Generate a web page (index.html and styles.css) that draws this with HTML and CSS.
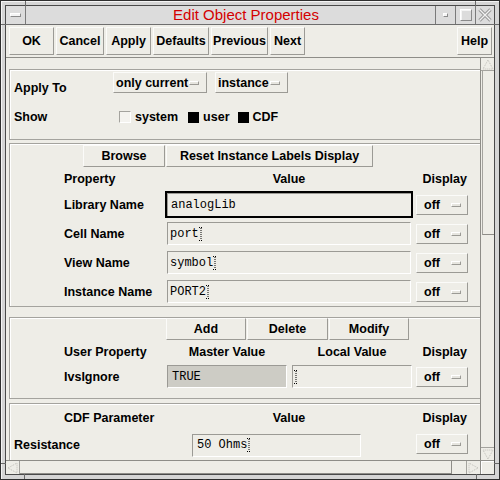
FILE: index.html
```html
<!DOCTYPE html>
<html>
<head>
<meta charset="utf-8">
<link rel="stylesheet" href="styles.css">
</head>
<body>
<div class="window">
  <span class="tick tick-t1"></span><span class="tick tick-t2"></span>
  <span class="tick tick-b1"></span><span class="tick tick-b2"></span>
  <span class="tick tick-l1"></span><span class="tick tick-l2"></span>
  <span class="tick tick-r1"></span><span class="tick tick-r2"></span>
  <div class="inner">
    <div class="titlebar">
      <div class="tb-menu"><span class="menu-bar"></span></div>
      <div class="tb-title">Edit Object Properties</div>
      <div class="tb-btn"><span class="min-sq"></span></div>
      <div class="tb-btn"><span class="max-sq"></span></div>
      <div class="tb-btn tb-close">
        <svg width="14" height="14" viewBox="0 0 14 14"><path d="M1.5 1.5L12.5 12.5M12.5 1.5L1.5 12.5" stroke="#9a9a9a" stroke-width="3.2" fill="none"/><path d="M1.5 1.5L12.5 12.5M12.5 1.5L1.5 12.5" stroke="#f2f2f2" stroke-width="1.2" fill="none"/></svg>
      </div>
    </div>

    <div class="toolbar">
      <div class="btn w-ok">OK</div>
      <div class="btn w-cancel">Cancel</div>
      <div class="btn w-apply">Apply</div>
      <div class="btn w-defaults">Defaults</div>
      <div class="btn w-prev">Previous</div>
      <div class="btn w-next">Next</div>
      <div class="btn w-help">Help</div>
    </div>

    <div class="main">
      <div class="viewport">
        <div class="sec sec1">
          <div class="row-apply">
            <div class="lbl-apply">Apply To</div>
            <div class="opt opt-wide"><span>only current</span><span class="ind"></span></div>
            <div class="opt opt-inst"><span>instance</span><span class="ind"></span></div>
          </div>
          <div class="row-show">
            <div class="lbl-show">Show</div>
            <span class="chk"></span><span class="chk-txt gap-sys">system</span>
            <span class="chk on"></span><span class="chk-txt gap-user">user</span>
            <span class="chk on"></span><span class="chk-txt">CDF</span>
          </div>
        </div>

        <div class="sec sec2">
          <div class="btnrow btnrow2">
            <div class="sbtn w-browse">Browse</div>
            <div class="sbtn w-reset">Reset Instance Labels Display</div>
          </div>
          <div class="hdr grid2">
            <div>Property</div>
            <div class="center">Value</div>
            <div class="right">Display</div>
          </div>
          <div class="prow grid2">
            <div>Library Name</div>
            <div class="inp focus">analogLib</div>
            <div class="off"><span>off</span><span class="ind"></span></div>
          </div>
          <div class="prow grid2">
            <div>Cell Name</div>
            <div class="inp">port<svg class="caret" width="4" height="14" viewBox="0 0 4 14"><path d="M0 0.5h4M2 1v12M0 13.5h4" stroke="#000" stroke-width="1" stroke-dasharray="1 1" fill="none"/></svg></div>
            <div class="off"><span>off</span><span class="ind"></span></div>
          </div>
          <div class="prow grid2">
            <div>View Name</div>
            <div class="inp">symbol<svg class="caret" width="4" height="14" viewBox="0 0 4 14"><path d="M0 0.5h4M2 1v12M0 13.5h4" stroke="#000" stroke-width="1" stroke-dasharray="1 1" fill="none"/></svg></div>
            <div class="off"><span>off</span><span class="ind"></span></div>
          </div>
          <div class="prow grid2">
            <div>Instance Name</div>
            <div class="inp">PORT2<svg class="caret" width="4" height="14" viewBox="0 0 4 14"><path d="M0 0.5h4M2 1v12M0 13.5h4" stroke="#000" stroke-width="1" stroke-dasharray="1 1" fill="none"/></svg></div>
            <div class="off"><span>off</span><span class="ind"></span></div>
          </div>
        </div>

        <div class="sec sec3">
          <div class="btnrow btnrow3">
            <div class="sbtn w-add">Add</div>
            <div class="sbtn w-delete">Delete</div>
            <div class="sbtn w-modify">Modify</div>
          </div>
          <div class="hdr grid3">
            <div>User Property</div>
            <div class="center">Master Value</div>
            <div class="center">Local Value</div>
            <div class="right">Display</div>
          </div>
          <div class="urow grid3">
            <div>IvsIgnore</div>
            <div class="inp master">TRUE</div>
            <div class="inp"><svg class="caret first" width="4" height="14" viewBox="0 0 4 14"><path d="M0 0.5h4M2 1v12M0 13.5h4" stroke="#000" stroke-width="1" stroke-dasharray="1 1" fill="none"/></svg></div>
            <div class="off"><span>off</span><span class="ind"></span></div>
          </div>
        </div>

        <div class="sec sec4">
          <div class="hdr4 grid2">
            <div>CDF Parameter</div>
            <div class="center">Value</div>
            <div class="right">Display</div>
          </div>
          <div class="rrow">
            <div class="lbl-res">Resistance</div>
            <div class="inp inp-res">50 Ohms<svg class="caret" width="4" height="14" viewBox="0 0 4 14"><path d="M0 0.5h4M2 1v12M0 13.5h4" stroke="#000" stroke-width="1" stroke-dasharray="1 1" fill="none"/></svg></div>
            <div class="off off-res"><span>off</span><span class="ind"></span></div>
          </div>
        </div>
      </div>

      <div class="vscroll">
        <div class="arr arr-up"><svg width="12" height="11" viewBox="0 0 12 11"><path d="M6 1L1 10H11Z" stroke="#bfbeb8" stroke-dasharray="1 1" fill="none"/></svg></div>
        <div class="vthumb"></div>
        <div class="trough"></div>
        <div class="arr arr-down"><svg width="12" height="11" viewBox="0 0 12 11"><path d="M6 10L1 1H11Z" stroke="#bfbeb8" stroke-dasharray="1 1" fill="none"/></svg></div>
      </div>
    </div>

    <div class="hrow">
      <div class="hscroll">
        <div class="harr harr-l"><svg width="11" height="12" viewBox="0 0 11 12"><path d="M1 6L10 1V11Z" stroke="#bfbeb8" stroke-dasharray="1 1" fill="none"/></svg></div>
        <div class="hthumb"></div>
        <div class="htrough"></div>
        <div class="harr harr-r"><svg width="11" height="12" viewBox="0 0 11 12"><path d="M10 6L1 1V11Z" stroke="#bfbeb8" stroke-dasharray="1 1" fill="none"/></svg></div>
      </div>
      <div class="corner"></div>
    </div>
  </div>
</div>
</body>
</html>
```

FILE: styles.css
```css
* { box-sizing: border-box; }

body {
  margin: 0;
  font-family: "Liberation Sans", Arial, sans-serif;
  font-size: 12.5px;
  font-weight: bold;
  color: #000;
  background: #ffffff;
}

.window {
  position: relative;
  width: 500px;
  height: 480px;
  border: 1px solid #2e2e2e;
  background: #d5d5d5;
  box-shadow: inset 1px 1px 0 #f4f4f4;
  padding: 4px;
  display: flex;
}

.tick { position: absolute; background: #6a6a6a; }
.tick-t1 { left: 24px; top: 0; width: 1px; height: 5px; }
.tick-t2 { left: 474px; top: 0; width: 1px; height: 5px; }
.tick-b1 { left: 23px; bottom: 0; width: 1px; height: 5px; }
.tick-b2 { left: 475px; bottom: 0; width: 1px; height: 5px; }
.tick-l1 { left: 0; top: 23px; width: 5px; height: 1px; }
.tick-l2 { left: 0; top: 462px; width: 5px; height: 1px; }
.tick-r1 { right: 0; top: 23px; width: 5px; height: 1px; }
.tick-r2 { right: 0; top: 462px; width: 5px; height: 1px; }

.inner {
  flex: 1;
  min-width: 0;
  border: 1px solid #4a4a4a;
  background: #eeede7;
  display: flex;
  flex-direction: column;
}

/* title bar */
.titlebar {
  height: 19px;
  flex: none;
  display: flex;
  background: #dcdcdc;
  border-bottom: 1px solid #6e6e6e;
}
.tb-menu {
  width: 20px;
  border-right: 1px solid #7a7a7a;
  display: flex;
  align-items: center;
  justify-content: center;
}
.menu-bar {
  width: 11px;
  height: 4px;
  background: #f4f4f4;
  border: 1px solid;
  border-color: #ffffff #8a8a8a #8a8a8a #ffffff;
}
.tb-title {
  flex: 1;
  text-align: center;
  padding-left: 31px;
  font-weight: normal;
  font-size: 15px;
  line-height: 18px;
  color: #d40000;
}
.tb-btn {
  width: 20px;
  border-left: 1px solid #7a7a7a;
  display: flex;
  align-items: center;
  justify-content: center;
}
.tb-close { width: 19px; }
.min-sq {
  width: 5px;
  height: 4px;
  background: #f4f4f4;
  border: 1px solid;
  border-color: #ffffff #8a8a8a #8a8a8a #ffffff;
}
.max-sq {
  width: 12px;
  height: 12px;
  border: 1px solid;
  border-color: #ffffff #8a8a8a #8a8a8a #ffffff;
  box-shadow: 1px 1px 0 #f4f4f4 inset;
}

/* toolbar */
.toolbar {
  height: 33px;
  flex: none;
  display: flex;
  gap: 2px;
  padding: 2px 2px 2px 3px;
  border-bottom: 1px solid #8e8d88;
}
.btn, .sbtn {
  display: flex;
  align-items: center;
  justify-content: center;
  background: #eeede7;
  border: 1px solid;
  border-color: #fbfbf9 #9b9a95 #9b9a95 #fbfbf9;
  white-space: nowrap;
}
.btn { height: 28px; }
.w-ok { width: 45px; }
.w-cancel { width: 48px; }
.w-apply { width: 45px; }
.w-defaults { width: 56px; }
.w-prev { width: 57px; }
.w-next { width: 35px; }
.w-help { width: 35px; margin-left: auto; }

/* main */
.main {
  flex: 1;
  min-height: 0;
  display: flex;
}
.viewport {
  flex: 1;
  min-width: 0;
  overflow: hidden;
  padding: 11px 0 0 3px;
}

.sec {
  width: 490px;
  border: 1px solid #a4a39e;
  box-shadow: inset 1px 1px 0 #ffffff;
}
.sec1 { height: 71px; }
.sec2 { height: 164px; margin-top: 3px; }
.sec3 { height: 82px; margin-top: 10px; }
.sec4 { height: 80px; margin-top: 4px; }

/* section 1 */
.row-apply {
  height: 21px;
  margin-top: 2px;
  display: flex;
  align-items: flex-start;
}
.lbl-apply {
  width: 103px;
  padding-left: 4px;
  margin-top: 9px;
  line-height: 14px;
}
.opt, .off {
  display: flex;
  align-items: center;
  justify-content: space-between;
  background: #eeede7;
  border: 1px solid;
  border-color: #fbfbf9 #9b9a95 #9b9a95 #fbfbf9;
  white-space: nowrap;
}
.opt { height: 21px; padding: 0 7px 0 2px; }
.opt-wide { width: 94px; }
.opt-inst { width: 73px; margin-left: 8px; }
.ind {
  width: 10px;
  height: 4px;
  background: #e6e5df;
  border: 1px solid;
  border-color: #ffffff #9b9a95 #9b9a95 #ffffff;
}
.row-show {
  height: 14px;
  margin-top: 17px;
  display: flex;
  align-items: center;
  line-height: 14px;
}
.lbl-show { width: 109px; padding-left: 4px; }
.chk {
  width: 12px;
  height: 12px;
  margin-right: 4px;
  background: #f4f3ef;
  border: 1px solid;
  border-color: #a4a39e #ffffff #ffffff #a4a39e;
}
.chk.on {
  width: 11px;
  height: 11px;
  background: #000;
  border: none;
}
.gap-sys { margin-right: 10px; }
.gap-user { margin-right: 8px; }

/* section 2 */
.btnrow { display: flex; height: 22px; }
.sbtn { height: 22px; }
.btnrow2 { margin-top: 1px; padding-left: 73px; gap: 1px; }
.w-browse { width: 82px; }
.w-reset { width: 207px; }

.grid2 {
  display: grid;
  grid-template-columns: 101px 248px 55px;
  padding-left: 54px;
  align-items: center;
}
.grid2 > :nth-child(3) { margin-left: 3px; }
.hdr { height: 23px; }
.hdr4 { height: 27px; }
.center { text-align: center; }
.right { text-align: right; padding-right: 1px; }
.prow { height: 29px; }

.inp {
  height: 23px;
  display: flex;
  align-items: center;
  padding-left: 2px;
  background: #eeede7;
  border: 1px solid;
  border-color: #9b9a95 #ffffff #ffffff #9b9a95;
  font-family: "Liberation Mono", "Courier New", monospace;
  font-weight: normal;
  font-size: 12px;
  white-space: nowrap;
}
.grid2 .inp { margin: 0 2px; }
.grid2 .inp.focus {
  margin: 0;
  height: 27px;
  padding-left: 4px;
  border: 2px solid #000;
  box-shadow: inset 1px 1px 0 #9b9a95;
}
.caret { flex: none; }
.caret.first { margin-left: -1px; }
.off {
  height: 20px;
  padding: 0 6px 0 7px;
}

/* section 3 */
.btnrow3 { padding-left: 156px; }
.w-add { width: 80px; }
.w-delete { width: 81px; margin-left: 1px; }
.w-modify { width: 80px; margin-left: 1px; }
.grid3 {
  display: grid;
  grid-template-columns: 103px 120px 125px 56px;
  padding-left: 54px;
  align-items: center;
}
.grid3 > :nth-child(3) { margin-left: 5px; }
.grid3 > :nth-child(4) { margin-left: 4px; }
.urow { height: 27px; }
.master {
  background: #cdccc5;
  padding-left: 4px;
}

/* section 4 */
.rrow {
  height: 28px;
  display: flex;
  align-items: center;
  padding-left: 4px;
}
.lbl-res { width: 178px; }
.inp-res { width: 169px; padding-left: 4px; }
.off-res { width: 52px; margin-left: 55px; margin-top: -3px; }

/* scrollbars */
.vscroll {
  width: 14px;
  flex: none;
  border-left: 1px solid #8e8d88;
  display: flex;
  flex-direction: column;
}
.arr {
  height: 13px;
  flex: none;
  display: flex;
  align-items: center;
  justify-content: center;
}
.arr-up { border-bottom: 1px solid #a4a39e; }
.arr-down { border-top: 1px solid #a4a39e; }
.vthumb {
  height: 164px;
  flex: none;
  margin-left: 1px;
  border-left: 1px solid #a4a39e;
  border-bottom: 1px solid #8e8d88;
}
.trough { flex: 1; }

.hrow {
  height: 14px;
  flex: none;
  display: flex;
}
.hscroll {
  flex: 1;
  display: flex;
  border-top: 1px solid #8e8d88;
}
.harr {
  width: 14px;
  flex: none;
  display: flex;
  align-items: center;
  justify-content: center;
}
.harr-l { border-right: 1px solid #a4a39e; }
.harr-r { border-left: 1px solid #a4a39e; }
.hthumb {
  width: 432px;
  flex: none;
  border-right: 1px solid #8e8d88;
  border-bottom: 1px solid #8e8d88;
}
.htrough { flex: 1; }
.corner {
  width: 14px;
  flex: none;
  border-left: 1px solid #8e8d88;
  border-top: 1px solid #8e8d88;
  box-shadow: inset 1px 1px 0 #ffffff;
}
```
